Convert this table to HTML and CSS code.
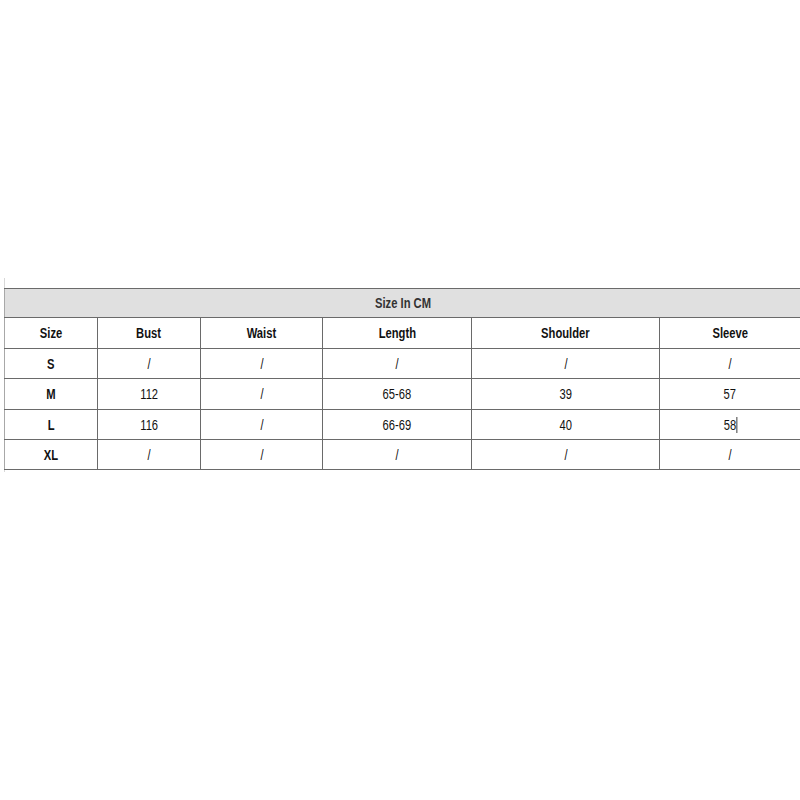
FILE: index.html
```html
<!DOCTYPE html>
<html>
<head>
<meta charset="utf-8">
<link rel="stylesheet" href="styles.css">
</head>
<body>
<div class="wrap">
<table class="sizes">
<colgroup>
<col class="c1"><col class="c2"><col class="c3"><col class="c4"><col class="c5"><col class="c6">
</colgroup>
<tr class="title"><td colspan="6"><span class="t">Size In CM</span></td></tr>
<tr class="head"><th><span class="t">Size</span></th><th><span class="t">Bust</span></th><th><span class="t">Waist</span></th><th><span class="t">Length</span></th><th><span class="t">Shoulder</span></th><th><span class="t">Sleeve</span></th></tr>
<tr><th><span class="t">S</span></th><td><span class="t">/</span></td><td><span class="t">/</span></td><td><span class="t">/</span></td><td><span class="t">/</span></td><td><span class="t">/</span></td></tr>
<tr class="r31"><th><span class="t">M</span></th><td><span class="t">112</span></td><td><span class="t">/</span></td><td><span class="t">65-68</span></td><td><span class="t">39</span></td><td><span class="t">57</span></td></tr>
<tr><th><span class="t">L</span></th><td><span class="t">116</span></td><td><span class="t">/</span></td><td><span class="t">66-69</span></td><td><span class="t">40</span></td><td><span class="t">58<span class="caret"></span></span></td></tr>
<tr><th><span class="t">XL</span></th><td><span class="t">/</span></td><td><span class="t">/</span></td><td><span class="t">/</span></td><td><span class="t">/</span></td><td><span class="t">/</span></td></tr>
</table>
</div>
</body>
</html>
```

FILE: styles.css
```css
html, body {
  margin: 0;
  padding: 0;
  background: #fff;
}
.wrap {
  margin-top: 278px;
  padding-top: 10px;
  margin-left: 4px;
  width: 796px;
  border-left: 1px solid #d8d8d8;
  box-sizing: border-box;
  height: 194px;
}
.sizes {
  border-collapse: collapse;
  table-layout: fixed;
  width: 796px;
  margin-left: -1px;
  font-family: "Liberation Sans", Arial, sans-serif;
  font-size: 14px;
  color: #111;
}
.c1 { width: 93px; }
.c2 { width: 103px; }
.c3 { width: 122px; }
.c4 { width: 149px; }
.c5 { width: 188px; }
.c6 { width: 141px; }
.sizes td, .sizes th {
  border: 1px solid #6a6a6a;
  text-align: center;
  padding: 0;
  height: 29px;
  font-weight: normal;
}
.sizes th {
  font-weight: bold;
}
.sizes tr td:first-child, .sizes tr th:first-child {
  border-left-color: #a8a8a8;
}
.t {
  display: inline-block;
  transform: scaleX(0.8);
}
.title td {
  background: #e0e0e0;
  color: #333;
  font-weight: bold;
  height: 28px;
}
.head th, .r31 th, .r31 td {
  height: 30px;
}
.caret {
  display: inline-block;
  width: 1.3px;
  height: 16px;
  background: #111;
  vertical-align: -3px;
}
```
